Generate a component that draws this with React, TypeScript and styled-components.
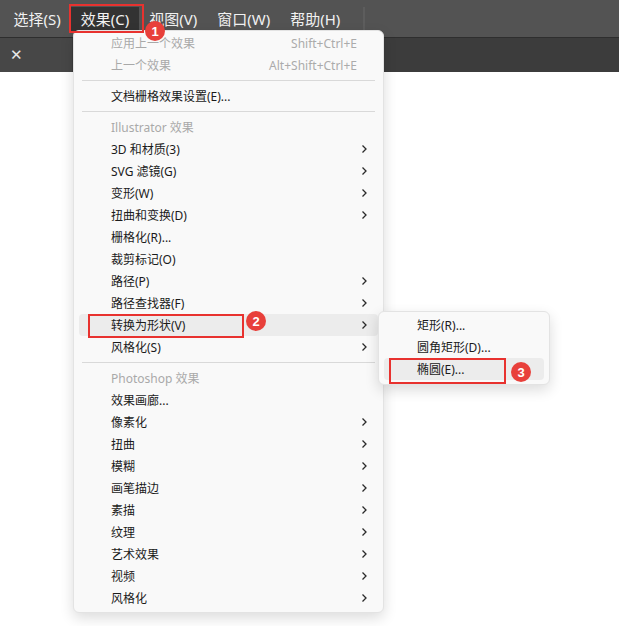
import React from "react";
import styled, { createGlobalStyle } from "styled-components";

const GlobalStyle = createGlobalStyle`
  html, body {
    margin: 0;
    padding: 0;
    background: #ffffff;
  }
  body {
    font-family: "Noto Sans", "Noto Sans CJK SC", sans-serif;
  }
`;

const Page = styled.div`
  position: relative;
  width: 619px;
  height: 626px;
  overflow: hidden;
  background: #ffffff;
`;

const MenuBar = styled.div`
  display: flex;
  align-items: center;
  height: 37px;
  padding-left: 4px;
  background: #535353;
  border-bottom: 1px solid #2e2e2e;
`;

const TopItem = styled.div<{ $active?: boolean }>`
  display: flex;
  align-items: center;
  height: 24px;
  padding: 0 9.5px;
  margin-right: 1px;
  font-size: 15px;
  color: #f1f1f1;
  background: ${(p) => (p.$active ? "#333333" : "transparent")};
  white-space: nowrap;
`;

const BarDivider = styled.div`
  width: 2px;
  height: 30px;
  margin-left: 12px;
  margin-top: 6px;
  background: #5d5d5d;
`;

const TabBar = styled.div`
  display: flex;
  height: 34px;
  background: #3c3c3c;
`;

const Tab = styled.div`
  display: flex;
  align-items: center;
  width: 72px;
  padding-left: 10px;
  box-sizing: border-box;
  background: #474747;
  color: #e8e8e8;
  font-size: 15px;
  font-weight: 700;
  font-family: "DejaVu Sans", sans-serif;
`;

const Menu = styled.div<{ $left: number; $top: number; $width: number; $pad: number }>`
  position: absolute;
  left: ${(p) => p.$left}px;
  top: ${(p) => p.$top}px;
  width: ${(p) => p.$width}px;
  box-sizing: border-box;
  padding: ${(p) => p.$pad}px 0 ${(p) => p.$pad + 2}px;
  background: #f9f9f9;
  border: 1px solid #e3e3e3;
  border-radius: 6px;
  box-shadow: 0 5px 14px rgba(0, 0, 0, 0.14);
`;

const Row = styled.div<{ $dim?: boolean; $hot?: boolean; $inset: number; $indent: number }>`
  display: flex;
  align-items: center;
  height: 22px;
  margin: 0 ${(p) => p.$inset}px;
  padding-left: ${(p) => p.$indent}px;
  padding-right: 10px;
  border-radius: 4px;
  font-size: 12px;
  color: ${(p) => (p.$dim ? "#a9a9a9" : "#1b1b1b")};
  background: ${(p) => (p.$hot ? "#ececec" : "transparent")};
  white-space: nowrap;
`;

const Label = styled.span`
  flex: 1;
`;

const Shortcut = styled.span`
  margin-right: 11px;
  color: #ababab;
`;

const Separator = styled.div`
  height: 1px;
  margin: 4px 8px 4px 8px;
  background: #d9d9d9;
`;

const Callout = styled.div<{ $x: number; $y: number; $w: number; $h: number }>`
  position: absolute;
  left: ${(p) => p.$x}px;
  top: ${(p) => p.$y}px;
  width: ${(p) => p.$w}px;
  height: ${(p) => p.$h}px;
  box-sizing: border-box;
  border: 2px solid #e8322f;
  pointer-events: none;
`;

const Badge = styled.div<{ $x: number; $y: number }>`
  position: absolute;
  left: ${(p) => p.$x - 10}px;
  top: ${(p) => p.$y - 10}px;
  width: 20px;
  height: 20px;
  border-radius: 50%;
  background: #e8403b;
  color: #ffffff;
  font-size: 13px;
  font-weight: 700;
  font-family: "Liberation Sans", sans-serif;
  display: flex;
  align-items: center;
  justify-content: center;
`;

const Chevron = () => (
  <svg width="7" height="10" viewBox="0 0 7 10">
    <path d="M1.5 1.5 L5 5 L1.5 8.5" fill="none" stroke="#2a2a2a" strokeWidth="1.3" />
  </svg>
);

type Item =
  | { kind: "sep" }
  | { kind: "item"; label: string; dim?: boolean; sub?: boolean; hot?: boolean; key?: string };

const items: Item[] = [
  { kind: "item", label: "应用上一个效果", dim: true, key: "Shift+Ctrl+E" },
  { kind: "item", label: "上一个效果", dim: true, key: "Alt+Shift+Ctrl+E" },
  { kind: "sep" },
  { kind: "item", label: "文档栅格效果设置(E)..." },
  { kind: "sep" },
  { kind: "item", label: "Illustrator 效果", dim: true },
  { kind: "item", label: "3D 和材质(3)", sub: true },
  { kind: "item", label: "SVG 滤镜(G)", sub: true },
  { kind: "item", label: "变形(W)", sub: true },
  { kind: "item", label: "扭曲和变换(D)", sub: true },
  { kind: "item", label: "栅格化(R)..." },
  { kind: "item", label: "裁剪标记(O)" },
  { kind: "item", label: "路径(P)", sub: true },
  { kind: "item", label: "路径查找器(F)", sub: true },
  { kind: "item", label: "转换为形状(V)", sub: true, hot: true },
  { kind: "item", label: "风格化(S)", sub: true },
  { kind: "sep" },
  { kind: "item", label: "Photoshop 效果", dim: true },
  { kind: "item", label: "效果画廊..." },
  { kind: "item", label: "像素化", sub: true },
  { kind: "item", label: "扭曲", sub: true },
  { kind: "item", label: "模糊", sub: true },
  { kind: "item", label: "画笔描边", sub: true },
  { kind: "item", label: "素描", sub: true },
  { kind: "item", label: "纹理", sub: true },
  { kind: "item", label: "艺术效果", sub: true },
  { kind: "item", label: "视频", sub: true },
  { kind: "item", label: "风格化", sub: true },
];

const shapes = [
  { label: "矩形(R)..." },
  { label: "圆角矩形(D)..." },
  { label: "椭圆(E)...", hot: true },
];

const App: React.FC = () => {
  return (
    <Page>
      <GlobalStyle />
      <MenuBar>
        <TopItem>选择(S)</TopItem>
        <TopItem $active>效果(C)</TopItem>
        <TopItem>视图(V)</TopItem>
        <TopItem>窗口(W)</TopItem>
        <TopItem>帮助(H)</TopItem>
        <BarDivider />
      </MenuBar>
      <TabBar>
        <Tab>✕</Tab>
      </TabBar>

      {/* 效果 菜单 */}
      <Menu $left={73} $top={30} $width={311} $pad={1}>
        {items.map((it, i) =>
          it.kind === "sep" ? (
            <Separator key={i} />
          ) : (
            <Row key={i} $dim={it.dim} $hot={it.hot} $inset={5} $indent={32}>
              <Label>{it.label}</Label>
              {it.key && <Shortcut>{it.key}</Shortcut>}
              {it.sub && <Chevron />}
            </Row>
          )
        )}
      </Menu>

      {/* 转换为形状 子菜单 */}
      <Menu $left={378} $top={311} $width={172} $pad={2}>
        {shapes.map((s) => (
          <Row key={s.label} $hot={s.hot} $inset={5} $indent={33}>
            <Label>{s.label}</Label>
          </Row>
        ))}
      </Menu>

      <Callout $x={69} $y={4} $w={75} $h={29} />
      <Badge $x={155} $y={31}>1</Badge>
      <Callout $x={88} $y={314} $w={156} $h={24} />
      <Badge $x={256} $y={321}>2</Badge>
      <Callout $x={389} $y={358} $w={117} $h={26} />
      <Badge $x={521} $y={372}>3</Badge>
    </Page>
  );
};

export default App;
